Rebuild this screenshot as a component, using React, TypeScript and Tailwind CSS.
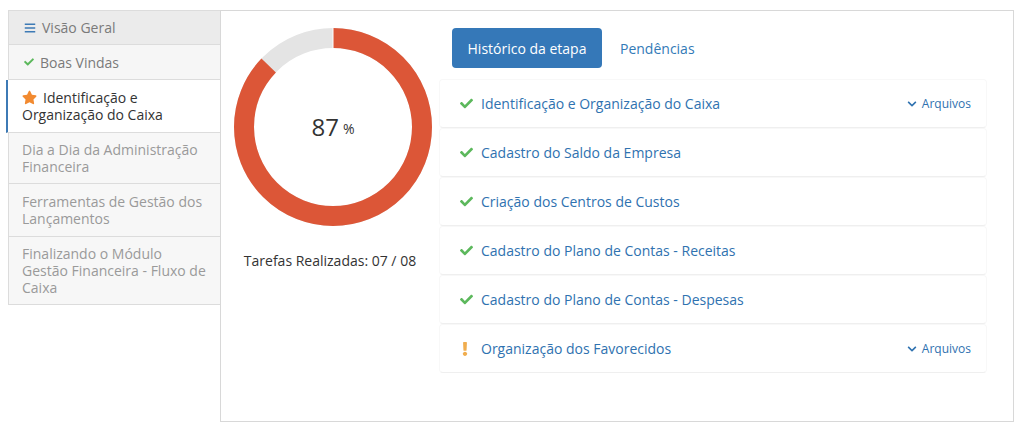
import React from "react";
import { FaBars, FaCheck, FaStar, FaChevronDown, FaExclamation } from "react-icons/fa";

const rows = [
  { label: "Identificação e Organização do Caixa", ok: true, files: true },
  { label: "Cadastro do Saldo da Empresa", ok: true, files: false },
  { label: "Criação dos Centros de Custos", ok: true, files: false },
  { label: "Cadastro do Plano de Contas - Receitas", ok: true, files: false },
  { label: "Cadastro do Plano de Contas - Despesas", ok: true, files: false },
  { label: "Organização dos Favorecidos", ok: false, files: true },
];

function Donut() {
  const r = 89;
  const c = 2 * Math.PI * r;
  const red = c * 0.87;
  return (
    <div className="relative w-[200px] h-[200px]">
      <svg width="200" height="200" viewBox="0 0 200 200">
        <circle cx="100" cy="100" r={r} fill="none" stroke="#e4e4e4" strokeWidth="20" />
        <circle
          cx="100"
          cy="100"
          r={r}
          fill="none"
          stroke="#dc5637"
          strokeWidth="20"
          strokeDasharray={`${red} ${c}`}
          transform="rotate(-90 100 100)"
        />
        <line x1="100" y1="0" x2="100" y2="22" stroke="#fff" strokeWidth="1" />
      </svg>
      <div className="absolute inset-0 flex items-center justify-center text-[#333]">
        <span className="text-[24px] leading-none">87</span>
        <span className="text-[14px] leading-none ml-[4px] mt-[4px]">%</span>
      </div>
    </div>
  );
}

export default function App() {
  return (
    <div
      className="w-[1024px] h-[432px] bg-white pt-[10px] pl-[8px] flex items-start text-[14px] leading-[17px]"
      style={{ fontFamily: '"Open Sans", "Noto Sans", sans-serif' }}
    >
      <div className="w-[213px] flex flex-col">
        <div className="h-[35px] bg-[#ebebeb] border border-[#dcdcdc] pl-[15px] pr-[13px] flex items-center text-[#7a7a7a]">
          <FaBars className="text-[#3d7ab5] w-[12px] h-[12px] mr-[6px]" />
          Visão Geral
        </div>
        <div className="h-[35px] bg-[#f6f6f6] border border-t-0 border-[#dcdcdc] pl-[15px] pr-[13px] flex items-center text-[#7a7a7a]">
          <FaCheck className="text-[#5cb85c] w-[10px] h-[10px] mr-[6px]" />
          Boas Vindas
        </div>
        <div className="-ml-[2px] bg-white border-l-[2px] border-l-[#3d7ab5] border-b border-b-[#dcdcdc] pl-[14px] pr-[12px] py-[9px] text-[#333]">
          <FaStar className="inline text-[#f28a30] w-[15px] h-[15px] mr-[6px] -mt-[4px]" />
          Identificação e Organização do Caixa
        </div>
        <div className="bg-[#f7f7f7] border border-t-0 border-[#dcdcdc] px-[13px] py-[8px] text-[#9a9a9a]">
          Dia a Dia da Administração Financeira
        </div>
        <div className="bg-[#f7f7f7] border border-t-0 border-[#dcdcdc] px-[13px] py-[9px] text-[#9a9a9a]">
          Ferramentas de Gestão dos Lançamentos
        </div>
        <div className="bg-[#f7f7f7] border border-t-0 border-[#dcdcdc] px-[13px] py-[8px] text-[#9a9a9a]">
          Finalizando o Módulo Gestão Financeira - Fluxo de Caixa
        </div>
      </div>

      <div className="-ml-px w-[794px] h-[412px] border border-[#d8d8d8] flex">
        <div className="w-[218px] flex flex-col pt-[16px]">
          <div className="ml-[12px]">
            <Donut />
          </div>
          <div className="mt-[25px] text-center text-[#333]">Tarefas Realizadas: 07 / 08</div>
        </div>
        <div className="flex-1 pt-[17px] pr-[26px]">
          <div className="flex items-center pl-[13px]">
            <div className="h-[40px] w-[150px] rounded-[4px] bg-[#3578b8] text-white flex items-center justify-center">
              Histórico da etapa
            </div>
            <div className="ml-[18px] text-[#337ab7]">Pendências</div>
          </div>
          <div className="mt-[11px] flex flex-col">
            {rows.map((r) => (
              <div
                key={r.label}
                className="h-[49px] rounded-[4px] border border-[#f8f8f8] border-b-[#efefef] flex items-center pl-[20px] pr-[15px]"
              >
                <div className="w-[21px] flex items-center">
                  {r.ok ? (
                    <FaCheck className="text-[#5cb85c] w-[13px] h-[13px]" />
                  ) : (
                    <FaExclamation className="text-[#f0ad4e] w-[12px] h-[14px] -ml-[1px]" />
                  )}
                </div>
                <div className="text-[#2f72b0] flex-1">{r.label}</div>
                {r.files && (
                  <div className="flex items-center text-[12px] text-[#2f72b0]">
                    <FaChevronDown className="w-[10px] h-[10px] mr-[5px]" />
                    Arquivos
                  </div>
                )}
              </div>
            ))}
          </div>
        </div>
      </div>
    </div>
  );
}
